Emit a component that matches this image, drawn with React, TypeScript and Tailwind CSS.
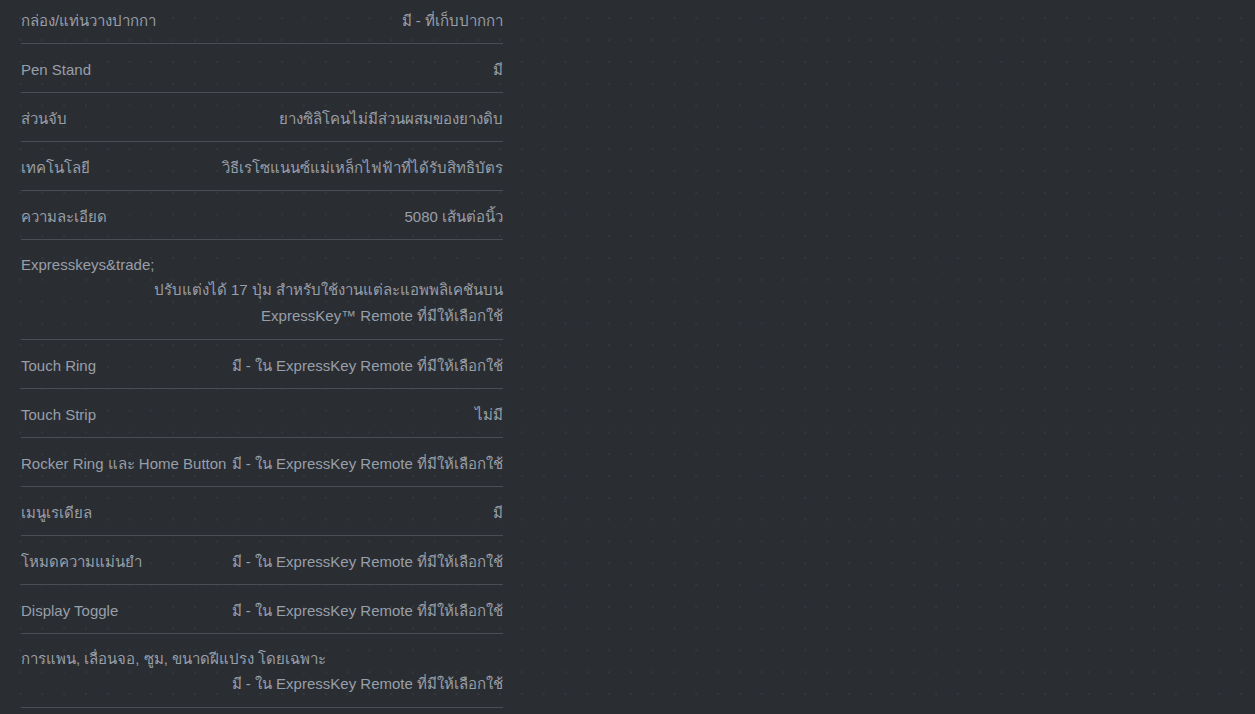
import React from "react";

type Row = { label: string; value: string[]; stacked?: boolean };

const rows: Row[] = [
  { label: "กล่อง/แท่นวางปากกา", value: ["มี - ที่เก็บปากกา"] },
  { label: "Pen Stand", value: ["มี"] },
  { label: "ส่วนจับ", value: ["ยางซิลิโคนไม่มีส่วนผสมของยางดิบ"] },
  { label: "เทคโนโลยี", value: ["วิธีเรโซแนนซ์แม่เหล็กไฟฟ้าที่ได้รับสิทธิบัตร"] },
  { label: "ความละเอียด", value: ["5080 เส้นต่อนิ้ว"] },
  {
    label: "Expresskeys&trade;",
    value: ["ปรับแต่งได้ 17 ปุ่ม สำหรับใช้งานแต่ละแอพพลิเคชันบน", "ExpressKey™ Remote ที่มีให้เลือกใช้"],
    stacked: true,
  },
  { label: "Touch Ring", value: ["มี - ใน ExpressKey Remote ที่มีให้เลือกใช้"] },
  { label: "Touch Strip", value: ["ไม่มี"] },
  { label: "Rocker Ring และ Home Button", value: ["มี - ใน ExpressKey Remote ที่มีให้เลือกใช้"] },
  { label: "เมนูเรเดียล", value: ["มี"] },
  { label: "โหมดความแม่นยำ", value: ["มี - ใน ExpressKey Remote ที่มีให้เลือกใช้"] },
  { label: "Display Toggle", value: ["มี - ใน ExpressKey Remote ที่มีให้เลือกใช้"] },
  {
    label: "การแพน, เลื่อนจอ, ซูม, ขนาดฝีแปรง โดยเฉพาะ",
    value: ["มี - ใน ExpressKey Remote ที่มีให้เลือกใช้"],
    stacked: true,
  },
];

export default function App() {
  return (
    <div
      className="w-[1255px] h-[714px] overflow-hidden bg-[#2a2d32] bg-[radial-gradient(circle,#34383e_1px,transparent_1.2px)] bg-[length:21.8px_21.8px] bg-[position:9.7px_7.4px] text-[#989fa9] text-[15px] leading-[25px]"
      style={{ fontFamily: '"Liberation Sans", Arial, "Noto Sans", sans-serif' }}
    >
      <div className="w-[482px] ml-[21px] -mt-[5px]">
        {rows.map((r, i) =>
          r.stacked ? (
            <div key={i} className="border-b border-[#4a4e54] pt-[12px] pb-[10px]">
              <div className="whitespace-nowrap">{r.label}</div>
              <div className="text-right leading-[26px] whitespace-nowrap">
                {r.value.map((v, j) => (
                  <div key={j}>{v}</div>
                ))}
              </div>
            </div>
          ) : (
            <div key={i} className="flex justify-between gap-[3px] border-b border-[#4a4e54] pt-[12.5px] pb-[10.5px] whitespace-nowrap">
              <div>{r.label}</div>
              <div className="text-right">{r.value[0]}</div>
            </div>
          )
        )}
      </div>
    </div>
  );
}
